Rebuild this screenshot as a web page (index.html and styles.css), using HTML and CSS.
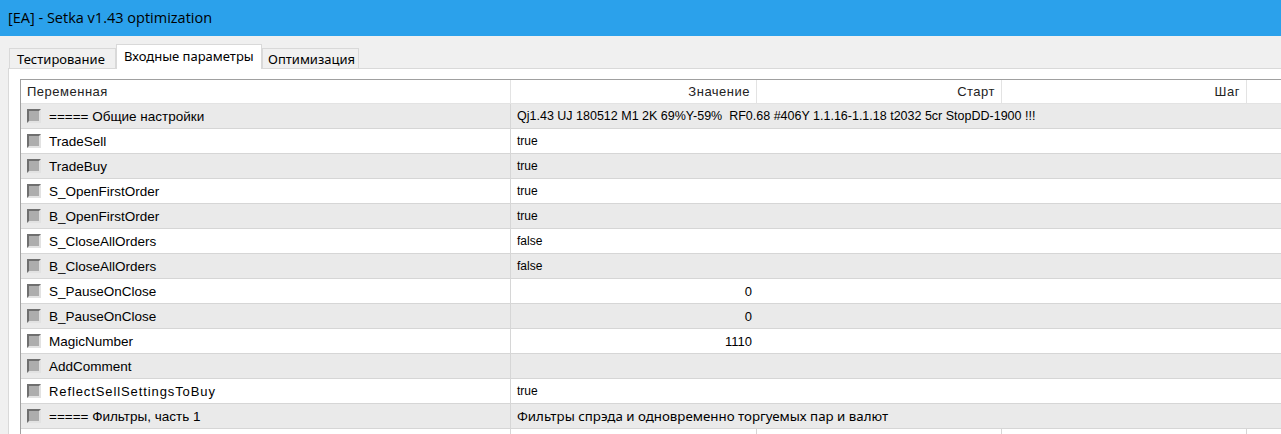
FILE: index.html
```html
<!DOCTYPE html>
<html lang="ru">

<head>
    <meta charset="UTF-8">
    <title>[EA] - Setka v1.43 optimization</title>
    <link rel="stylesheet" href="styles.css">
</head>

<body>
    <header class="titlebar">[EA] - Setka v1.43 optimization</header>

    <div class="window">
        <nav class="tabs">
            <div class="tab tab-test">Тестирование</div>
            <div class="tab tab-inputs active">Входные параметры</div>
            <div class="tab tab-opt">Оптимизация</div>
        </nav>

        <section class="panel">
            <div class="grid">
                <div class="row head">
                    <div class="cell">Переменная</div>
                    <div class="cell right">Значение</div>
                    <div class="cell right">Старт</div>
                    <div class="cell right">Шаг</div>
                    <div class="cell last"></div>
                </div>

                <div class="row odd">
                    <div class="cell name"><span class="box"></span>===== Общие настройки</div>
                    <div class="cell value wide">Qj1.43 UJ 180512 M1 2K 69%Y-59%  RF0.68 #406Y 1.1.16-1.1.18 t2032 5cr StopDD-1900 !!!</div>
                </div>
                <div class="row">
                    <div class="cell name"><span class="box"></span>TradeSell</div>
                    <div class="cell value">true</div>
                </div>
                <div class="row odd">
                    <div class="cell name"><span class="box"></span>TradeBuy</div>
                    <div class="cell value">true</div>
                </div>
                <div class="row">
                    <div class="cell name"><span class="box"></span>S_OpenFirstOrder</div>
                    <div class="cell value">true</div>
                </div>
                <div class="row odd">
                    <div class="cell name"><span class="box"></span>B_OpenFirstOrder</div>
                    <div class="cell value">true</div>
                </div>
                <div class="row">
                    <div class="cell name"><span class="box"></span>S_CloseAllOrders</div>
                    <div class="cell value">false</div>
                </div>
                <div class="row odd">
                    <div class="cell name"><span class="box"></span>B_CloseAllOrders</div>
                    <div class="cell value">false</div>
                </div>
                <div class="row">
                    <div class="cell name"><span class="box"></span>S_PauseOnClose</div>
                    <div class="cell value"><span class="num">0</span></div>
                </div>
                <div class="row odd">
                    <div class="cell name"><span class="box"></span>B_PauseOnClose</div>
                    <div class="cell value"><span class="num">0</span></div>
                </div>
                <div class="row">
                    <div class="cell name"><span class="box"></span>MagicNumber</div>
                    <div class="cell value"><span class="num">1110</span></div>
                </div>
                <div class="row odd">
                    <div class="cell name"><span class="box"></span>AddComment</div>
                    <div class="cell value"></div>
                </div>
                <div class="row">
                    <div class="cell name spaced"><span class="box"></span>ReflectSellSettingsToBuy</div>
                    <div class="cell value">true</div>
                </div>
                <div class="row odd">
                    <div class="cell name"><span class="box"></span>===== Фильтры, часть 1</div>
                    <div class="cell value big">Фильтры спрэда и одновременно торгуемых пар и валют</div>
                </div>
                <div class="row split">
                    <div class="cell name"><span class="box"></span></div>
                    <div class="cell"></div>
                    <div class="cell"></div>
                    <div class="cell"></div>
                    <div class="cell last"></div>
                </div>
            </div>
        </section>
    </div>
</body>

</html>
```

FILE: styles.css
```css
/* page */
html, body {
    margin: 0;
    padding: 0;
    height: 100%;
    overflow: hidden;
}

body {
    background-color: #f0f0f0;
    font-family: "Liberation Sans", Arial, sans-serif;
    color: #000;
}

/* window title */
.titlebar {
    height: 36px;
    line-height: 36px;
    background-color: #2ba1eb;
    padding-left: 8px;
    font-family: "Open Sans", "Noto Sans", sans-serif;
    font-size: 14.5px;
    color: #000;
}

.window {
    padding-left: 8px;
}

/* tabs */
.tabs {
    display: flex;
    align-items: flex-end;
    height: 32px;
    padding-left: 1px;
}

.tab {
    box-sizing: border-box;
    height: 20px;
    line-height: 20px;
    padding-left: 7px;
    border: 1px solid #d9d9d9;
    border-bottom: none;
    background-color: #f0f0f0;
    font-family: "Noto Sans", "Open Sans", sans-serif;
    font-size: 13px;
    color: #000;
    white-space: nowrap;
}

.tab-test {
    width: 107px;
}

.tab-inputs {
    width: 146px;
}

.tab-opt {
    width: 97px;
    padding-left: 5px;
}

.tab + .tab {
    border-left: none;
}

.tab.active {
    height: 25px;
    line-height: 22px;
    background-color: #fff;
    margin-bottom: -1px;
    border-left: 1px solid #d9d9d9;
}

.tab.active + .tab {
    border-left: 1px solid #d9d9d9;
}

/* tab body */
.panel {
    background-color: #fff;
    border-top: 1px solid #d9d9d9;
    border-left: 1px solid #d9d9d9;
    padding: 10px 0 0 11px;
    height: 400px;
}

.grid {
    border-top: 1px solid #a0a0a0;
    border-left: 1px solid #a0a0a0;
}

.row {
    display: grid;
    grid-template-columns: 490px 246px 245px 245px 1fr;
    height: 25px;
    box-sizing: border-box;
    border-bottom: 1px solid #d6d6d6;
    background-color: #fff;
}

.row.odd {
    background-color: #eaeaea;
}

.row.head {
    height: 24px;
    border-bottom: 1px solid #e3e3e3;
}

.cell {
    box-sizing: border-box;
    border-right: 1px solid #d6d6d6;
    display: flex;
    align-items: center;
    font-size: 13.5px;
    white-space: pre;
    overflow: hidden;
}

.cell.last {
    border-right: none;
}

.head .cell {
    padding: 0 6px;
    font-size: 13px;
    letter-spacing: 0.5px;
    color: #222;
    border-right-color: #e3e3e3;
}

.head .cell.right {
    justify-content: flex-end;
}

.name {
    padding-left: 6px;
}

.name.spaced {
    font-size: 13px;
    letter-spacing: 0.9px;
}

.box {
    width: 14px;
    height: 14px;
    box-sizing: border-box;
    border: 2px solid;
    border-color: #6f6f6f #e2e2e2 #e2e2e2 #6f6f6f;
    background-color: #adadad;
    margin-right: 8px;
    flex-shrink: 0;
    letter-spacing: 0;
}

.row .value {
    grid-column: 2 / -1;
    border-right: none;
    padding-left: 6px;
    font-size: 12px;
}

.row .value.wide {
    font-size: 12.5px;
}

.row .value.big {
    font-family: "Noto Sans", "Open Sans", sans-serif;
    font-size: 13.3px;
}

.num {
    width: 241px;
    text-align: right;
    margin-left: -6px;
    font-size: 13px;
}
```
